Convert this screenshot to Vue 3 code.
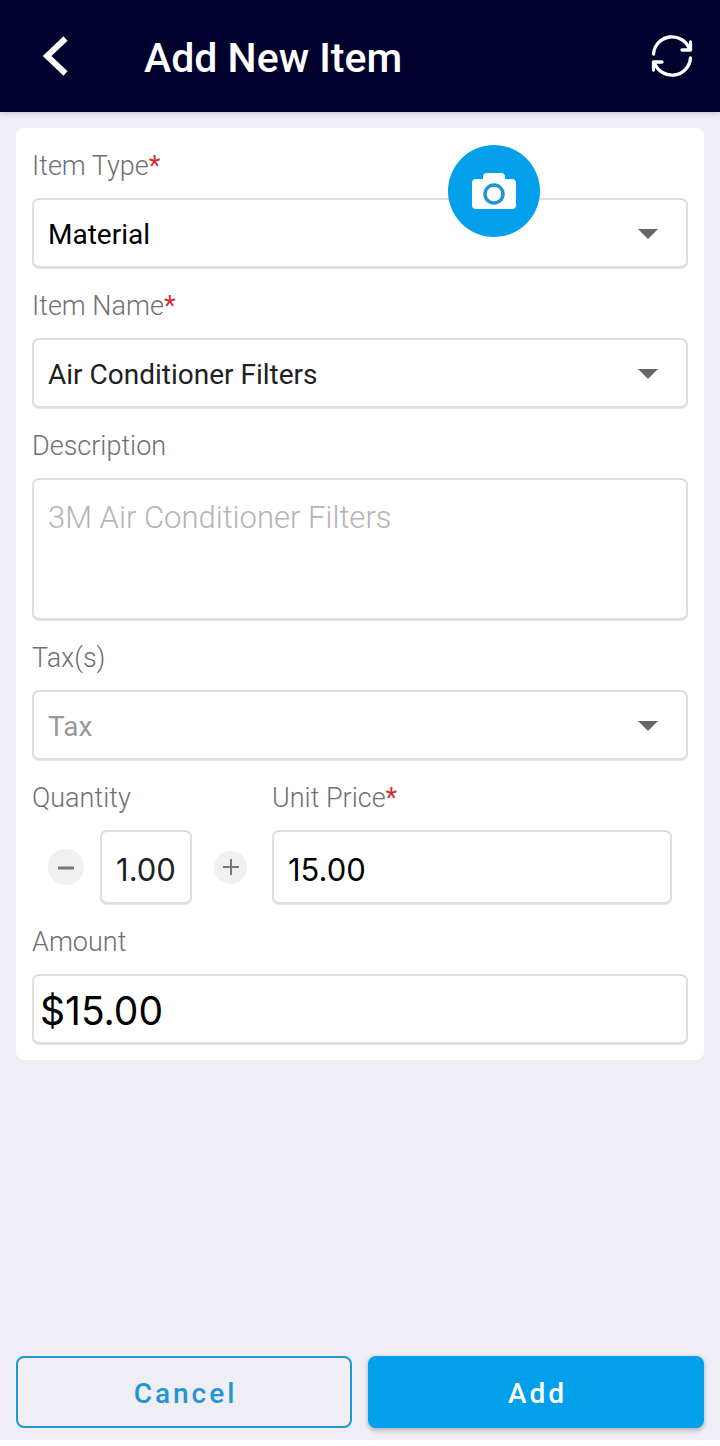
<script setup>
import { computed, ref } from 'vue'

const itemType = ref('Material')
const itemName = ref('Air Conditioner Filters')
const description = ref('')
const tax = ref('')
const quantity = ref('1.00')
const unitPrice = ref('15.00')
const amount = computed(() => '$' + (Number(quantity.value) * Number(unitPrice.value)).toFixed(2))

function step(delta) {
  quantity.value = Math.max(0, Number(quantity.value) + delta).toFixed(2)
}
</script>

<template>
  <div class="page">
    <header class="bar">
      <button class="icon-btn back" type="button" aria-label="Back">
        <svg width="26" height="40" viewBox="0 0 26 40" fill="none" stroke="#fff" stroke-width="6">
          <path d="M22.500 2.500 L4 20 L22.500 37.500" />
        </svg>
      </button>
      <h1>Add New Item</h1>
      <button class="icon-btn" type="button" aria-label="Refresh">
        <svg width="42" height="42" viewBox="0 0 42 42" fill="none" stroke="#fff" stroke-width="3.300" stroke-linecap="round" stroke-linejoin="round">
          <path d="M2.500 19 A18.600 18.600 0 0 1 38.500 14" />
          <path d="M31 15 H39.500 V7" />
          <path d="M39.500 23 A18.600 18.600 0 0 1 3.500 28" />
          <path d="M11 27 H2.500 V35" />
        </svg>
      </button>
    </header>

    <form id="item-form" class="card" @submit.prevent>
      <button class="camera" type="button" aria-label="Add photo">
        <svg width="46" height="38" viewBox="0 0 46 38">
          <path fill="#fff" d="M12 5 Q12 1 16 1 H30 Q34 1 34 5 V7 H41 Q45 7 45 11 V33 Q45 37 41 37 H5 Q1 37 1 33 V11 Q1 7 5 7 H12 Z" />
          <circle cx="23" cy="22" r="9" fill="none" stroke="#1f97d4" stroke-width="3.500" />
        </svg>
      </button>

      <div class="field">
        <label for="type">Item Type<span class="req">*</span></label>
        <div class="select">
          <select id="type" v-model="itemType" class="box strong">
            <option>Material</option>
          </select>
          <svg class="caret" width="20" height="10" viewBox="0 0 20 10"><path d="M0 0 H20 L10 10 Z" /></svg>
        </div>
      </div>

      <div class="field">
        <label for="name">Item Name<span class="req">*</span></label>
        <div class="select">
          <select id="name" v-model="itemName" class="box">
            <option>Air Conditioner Filters</option>
          </select>
          <svg class="caret" width="20" height="10" viewBox="0 0 20 10"><path d="M0 0 H20 L10 10 Z" /></svg>
        </div>
      </div>

      <div class="field">
        <label for="description">Description</label>
        <textarea id="description" v-model="description" class="box" placeholder="3M Air Conditioner Filters"></textarea>
      </div>

      <div class="field">
        <label for="tax">Tax(s)</label>
        <div class="select">
          <select id="tax" v-model="tax" class="box empty">
            <option value="">Tax</option>
          </select>
          <svg class="caret" width="20" height="10" viewBox="0 0 20 10"><path d="M0 0 H20 L10 10 Z" /></svg>
        </div>
      </div>

      <div class="pair">
        <div class="field">
          <label for="quantity">Quantity</label>
          <div class="stepper">
            <button class="step minus" type="button" aria-label="Decrease quantity" @click="step(-1)">
              <svg width="18" height="18" viewBox="0 0 18 18" stroke="#777" stroke-width="3"><path d="M1 10 H17" /></svg>
            </button>
            <input id="quantity" v-model="quantity" class="box number quantity" type="text" inputmode="decimal">
            <button class="step plus" type="button" aria-label="Increase quantity" @click="step(1)">
              <svg width="16" height="16" viewBox="0 0 16 16" stroke="#777" stroke-width="2"><path d="M0 8 H16 M8 0 V16" /></svg>
            </button>
          </div>
        </div>
        <div class="field">
          <label for="price">Unit Price<span class="req">*</span></label>
          <input id="price" v-model="unitPrice" class="box number strong" type="text" inputmode="decimal">
        </div>
      </div>

      <div class="field">
        <label for="amount">Amount</label>
        <input id="amount" class="box amount" type="text" readonly :value="amount">
      </div>
    </form>

    <footer class="actions">
      <button class="action cancel" type="button">Cancel</button>
      <button class="action add" type="submit" form="item-form">Add</button>
    </footer>
  </div>
</template>

<style>
body {
  margin: 0;
  background: #fff;
}
</style>

<style scoped>
.page {
  display: flex;
  flex-direction: column;
  box-sizing: border-box;
  min-height: calc(100vh - 6px);
  background: #efeef5;
  font-family: Roboto, "Liberation Sans", sans-serif;
}

button {
  padding: 0;
  border: 0;
  font-family: inherit;
  cursor: pointer;
}

svg {
  display: block;
}

.bar {
  position: relative;
  display: flex;
  align-items: center;
  height: 112px;
  padding: 0 26px 0 32px;
  background: #00002d;
  box-shadow: 0 1px 6px rgba(0, 0, 0, 0.2);
}

.bar h1 {
  flex: 1;
  margin: 0;
  padding: 4px 0 0 64px;
  color: #fff;
  font-size: 41px;
  line-height: 48px;
  font-weight: 500;
}

.icon-btn {
  display: flex;
  align-items: center;
  justify-content: center;
  width: 44px;
  height: 48px;
  background: none;
}

.back {
  width: 48px;
}

.card {
  position: relative;
  display: flex;
  flex-direction: column;
  gap: 16px;
  margin: 16px;
  padding: 16px;
  border-radius: 8px;
  background: #fff;
}

.camera {
  position: absolute;
  z-index: 1;
  top: 17px;
  right: 164px;
  display: flex;
  align-items: center;
  justify-content: center;
  width: 92px;
  height: 92px;
  border-radius: 50%;
  background: #02a0eb;
}

.field {
  display: flex;
  flex-direction: column;
  gap: 10px;
  min-width: 0;
}

label {
  color: #707070;
  font-size: 27px;
  font-weight: 300;
  line-height: 44px;
}

.req {
  color: #d32f35;
  font-weight: 400;
}

.box {
  box-sizing: border-box;
  width: 100%;
  height: 70px;
  margin: 0;
  padding: 2px 14px 0;
  border: 2px solid #dedede;
  border-radius: 7px;
  outline: 0;
  background: #fff;
  box-shadow: 0 1px 1px #e4e4e4;
  color: #212121;
  font-family: Roboto, sans-serif;
  font-size: 28px;
}

.strong {
  color: #000;
}

.select {
  position: relative;
}

select {
  display: block;
  appearance: none;
}

.caret {
  position: absolute;
  top: 31px;
  right: 30px;
  fill: #666;
  pointer-events: none;
}

textarea.box {
  display: block;
  height: 142px;
  padding: 18px 14px;
  resize: none;
  font-size: 31px;
  font-weight: 300;
  line-height: 40px;
}

textarea::placeholder {
  color: #b4b4b4;
  opacity: 1;
}

.empty {
  color: #999;
}

.pair {
  display: grid;
  grid-template-columns: 240px 1fr;
  padding-right: 16px;
}

.stepper {
  display: flex;
  align-items: center;
  padding-left: 16px;
}

.step {
  display: flex;
  align-items: center;
  justify-content: center;
  flex: none;
  border-radius: 50%;
  background: #f0f0f0;
}

.minus {
  width: 36px;
  height: 36px;
  margin-right: 16px;
}

.plus {
  width: 33px;
  height: 33px;
  margin-left: 22px;
}

.number {
  height: 74px;
  padding-top: 4px;
  font-family: Inter, Roboto, sans-serif;
  font-size: 31px;
}

.quantity {
  width: 92px;
  padding: 4px 0 0;
  text-align: center;
}

.amount {
  padding: 2px 6px 0;
  color: #000;
  font-family: Inter, Roboto, sans-serif;
  font-size: 39px;
}

.actions {
  display: grid;
  grid-template-columns: 1fr 1fr;
  gap: 16px;
  margin-top: auto;
  padding: 0 16px 12px;
}

.action {
  height: 72px;
  padding: 2px 0 0 3px;
  border-radius: 8px;
  font-size: 28px;
  font-weight: 500;
  letter-spacing: 3px;
}

.cancel {
  border: 2px solid #2196d3;
  background: transparent;
  color: #2196d3;
}

.add {
  background: #02a0eb;
  box-shadow: 0 2px 5px rgba(0, 0, 0, 0.3);
  color: #fff;
}
</style>
